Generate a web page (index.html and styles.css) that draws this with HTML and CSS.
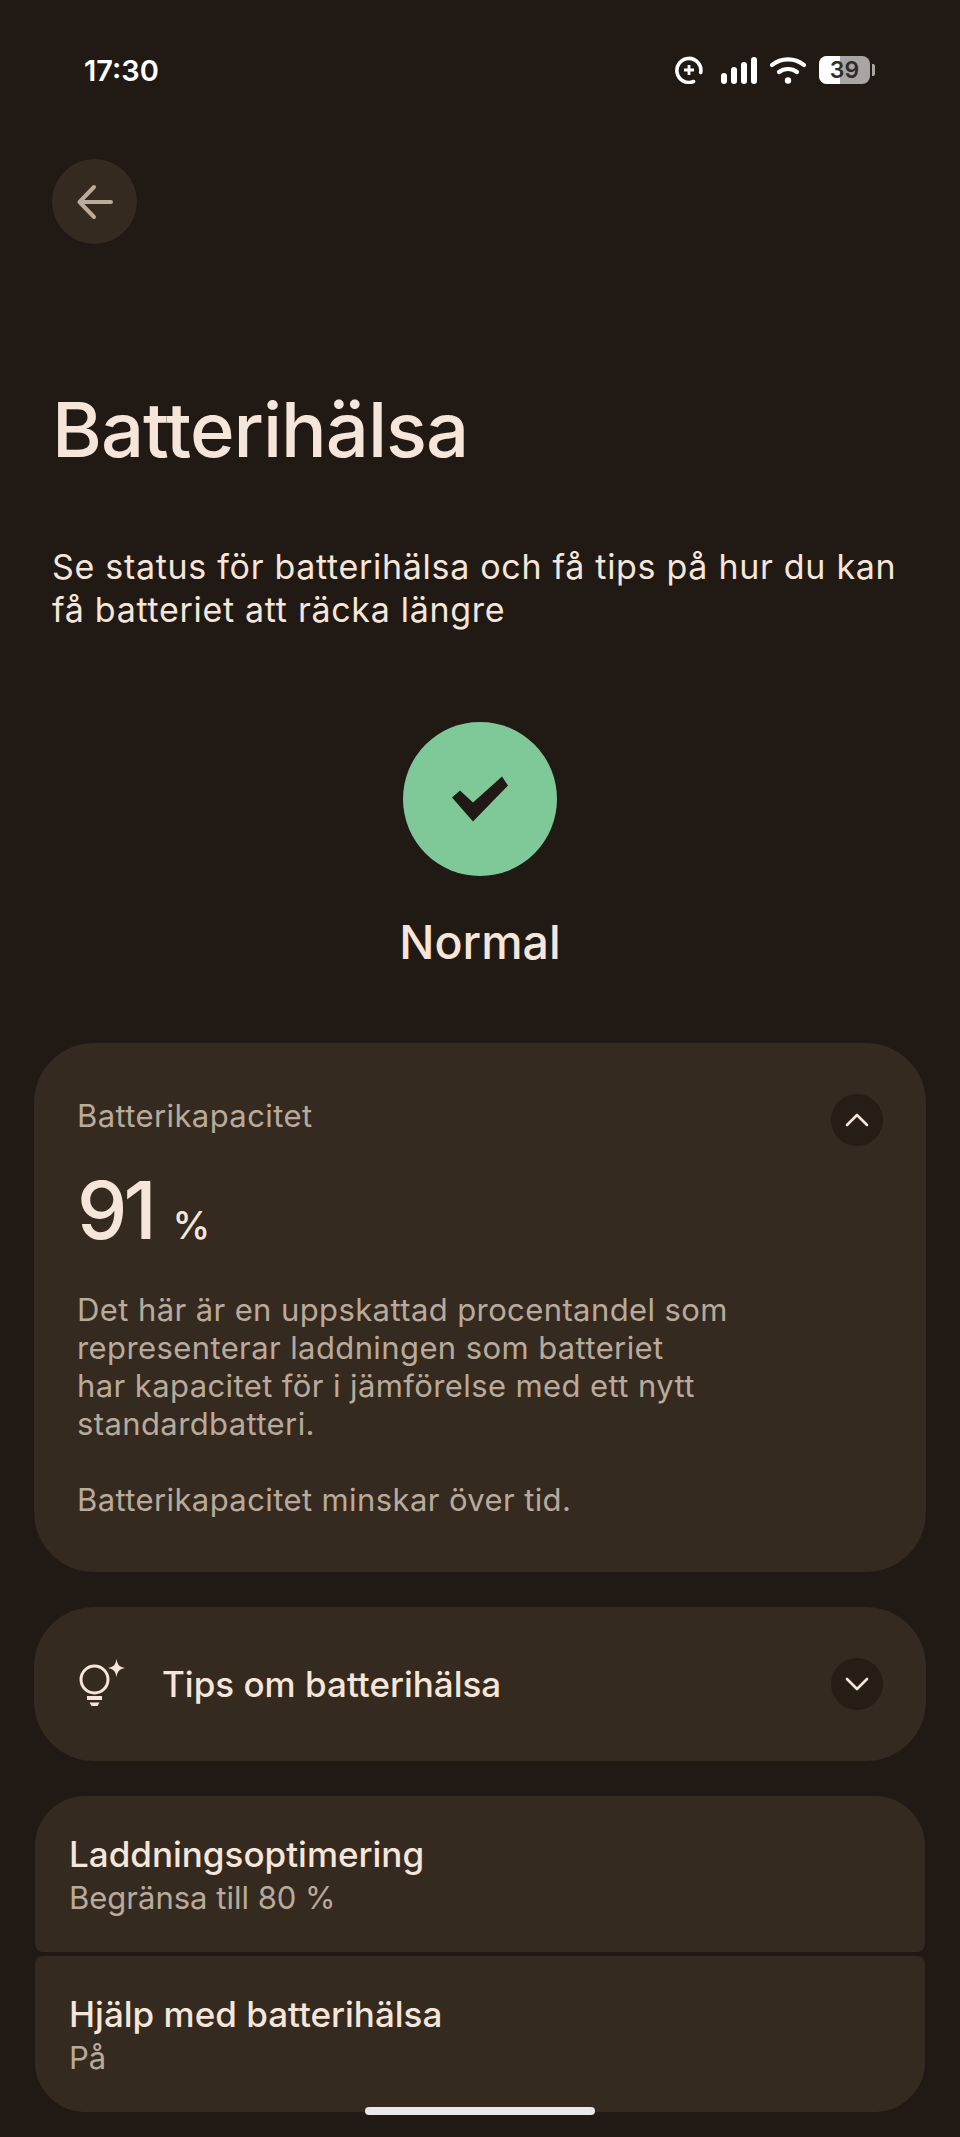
FILE: index.html
```html
<!DOCTYPE html>
<html lang="sv">

<head>
    <meta charset="UTF-8">
    <meta name="viewport" content="width=device-width, initial-scale=1.0">
    <title>Batterihälsa</title>
    <link rel="stylesheet" href="styles.css">
</head>

<body>
    <div class="screen">
        <!-- Status bar -->
        <div class="status-bar">
            <span class="clock">17:30</span>
            <div class="status-icons">
                <svg class="ring" width="28" height="28" viewBox="0 0 28 28" fill="none" stroke="#fff">
                    <path d="M18.500 25.500 A12 12 0 1 1 25.700 16.500" stroke-width="3.600" stroke-linecap="round"/>
                    <path d="M14 9v10M9 14h10" stroke-width="2.800"/>
                </svg>
                <svg width="36" height="27" viewBox="0 0 36 27" fill="#fff">
                    <rect x="0" y="16" width="6" height="11" rx="3"/>
                    <rect x="10" y="10" width="6" height="17" rx="3"/>
                    <rect x="20" y="5" width="6" height="22" rx="3"/>
                    <rect x="30" y="0" width="6" height="27" rx="3"/>
                </svg>
                <svg width="36" height="27" viewBox="0 0 36 27" fill="none" stroke="#fff" stroke-width="4.200" stroke-linecap="round">
                    <path d="M2 8 C11 0.500 25 0.500 34 8"/>
                    <path d="M9 15 C14 11 22 11 27 15"/>
                    <circle cx="18" cy="23.500" r="3.200" fill="#fff" stroke="none"/>
                </svg>
                <div class="battery">
                    <div class="battery-body"><span class="battery-fill"></span><span class="battery-level">39</span></div>
                    <span class="battery-tip"></span>
                </div>
            </div>
        </div>

        <!-- Back button -->
        <div class="back-btn">
            <svg width="40" height="40" viewBox="0 0 40 40" fill="none" stroke="#bcaa9b" stroke-width="4" stroke-linecap="round" stroke-linejoin="round">
                <path d="M36 20H5M19 5 4.500 20 19 35"/>
            </svg>
        </div>

        <h1 class="title">Batterihälsa</h1>
        <p class="intro">Se status för batterihälsa och få tips på hur du kan<br>få batteriet att räcka längre</p>

        <!-- Health status -->
        <div class="health">
            <div class="health-circle">
                <svg width="60" height="46" viewBox="0 0 60 46" fill="#211914">
                    <path d="M2 21.500 10 14.500 23 26.500 52 0.500 58 9.500 23 45.500Z"/>
                </svg>
            </div>
            <div class="health-label">Normal</div>
        </div>

        <!-- Capacity card -->
        <div class="card capacity">
            <div class="capacity-head">
                <span class="muted body-text capacity-label">Batterikapacitet</span>
                <div class="toggle">
                    <svg width="24" height="14" viewBox="0 0 24 14" fill="none" stroke="#f6e6da" stroke-width="2.600" stroke-linecap="round" stroke-linejoin="round">
                        <path d="M2 12 12 2 22 12"/>
                    </svg>
                </div>
            </div>
            <div class="capacity-value">91<span class="unit">%</span></div>
            <p class="muted body-text capacity-text">Det här är en uppskattad procentandel som<br>representerar laddningen som batteriet<br>har kapacitet för i jämförelse med ett nytt<br>standardbatteri.</p>
            <p class="muted body-text capacity-text capacity-note">Batterikapacitet minskar över tid.</p>
        </div>

        <!-- Tips card -->
        <div class="card tips">
            <svg class="tips-icon" width="48" height="52" viewBox="0 0 48 52" fill="none" stroke="#f6e6da" stroke-width="3">
                <circle cx="17.500" cy="21.500" r="13.500"/>
                <path d="M10 40h15" stroke-width="4"/>
                <path d="M12.500 44.500h10l-2 3.500h-6z" fill="#f6e6da" stroke="none"/>
                <path d="M39.500 1 C40.500 7 42.500 9 48 10 C42.500 11 40.500 13 39.500 19 C38.500 13 36.500 11 31 10 C36.500 9 38.500 7 39.500 1Z" fill="#f6e6da" stroke="none"/>
            </svg>
            <span class="tips-label">Tips om batterihälsa</span>
            <div class="toggle">
                <svg width="24" height="14" viewBox="0 0 24 14" fill="none" stroke="#f6e6da" stroke-width="2.600" stroke-linecap="round" stroke-linejoin="round">
                    <path d="M2 2 12 12 22 2"/>
                </svg>
            </div>
        </div>

        <!-- Settings -->
        <div class="settings">
            <div class="setting setting-top">
                <div class="setting-title">Laddningsoptimering</div>
                <div class="muted">Begränsa till 80 %</div>
            </div>
            <div class="setting setting-bottom">
                <div class="setting-title">Hjälp med batterihälsa</div>
                <div class="muted">På</div>
            </div>
        </div>

        <div class="home-bar"></div>
    </div>
</body>

</html>
```

FILE: styles.css
```css
/* Page */
html,
body {
    margin: 0;
    background-color: #211914;
}

.screen {
    position: relative;
    width: 960px;
    height: 2137px;
    overflow: hidden;
    color: #f6e6da;
    font-family: 'Inter', 'Noto Sans', sans-serif;
}

.muted {
    color: #b9aa9c;
    font-size: 31px;
    line-height: 38px;
}

.body-text {
    letter-spacing: 0.4px;
}

/* Status bar */
.status-bar {
    display: flex;
    justify-content: space-between;
    align-items: center;
    height: 40px;
    padding: 50px 85px 0 84px;
    color: #fff;
}

.clock {
    font-size: 29px;
    font-weight: 600;
}

.status-icons {
    display: flex;
    align-items: center;
    gap: 13px;
}

.ring {
    margin-right: 5px;
}

.battery {
    display: flex;
    align-items: center;
    gap: 2px;
}

.battery-body {
    position: relative;
    width: 51px;
    height: 28px;
    border-radius: 8px;
    overflow: hidden;
    background-color: #a8a5a2;
}

.battery-fill {
    position: absolute;
    left: 0;
    top: 0;
    bottom: 0;
    width: 21px;
    background-color: #fff;
}

.battery-level {
    position: relative;
    display: block;
    text-align: center;
    color: #302c29;
    font-size: 23px;
    font-weight: 600;
    line-height: 28px;
}

.battery-tip {
    width: 3px;
    height: 12px;
    border-radius: 0 2px 2px 0;
    background-color: #a8a5a2;
}

/* Back button */
.back-btn {
    display: flex;
    align-items: center;
    justify-content: center;
    width: 85px;
    height: 85px;
    margin: 69px 0 0 52px;
    border-radius: 50%;
    background-color: #352a20;
}

/* Heading */
.title {
    margin: 140px 0 0 52px;
    font-size: 76px;
    font-weight: 500;
    line-height: 90px;
    letter-spacing: -1px;
}

.intro {
    margin: 71px 0 0 52px;
    font-size: 34px;
    line-height: 43px;
    letter-spacing: 0.7px;
}

/* Health status */
.health {
    display: flex;
    flex-direction: column;
    align-items: center;
    margin-top: 91px;
}

.health-circle {
    display: flex;
    align-items: center;
    justify-content: center;
    width: 154px;
    height: 154px;
    border-radius: 50%;
    background-color: #7fc999;
}

.health-label {
    margin-top: 39px;
    font-size: 46.5px;
    font-weight: 500;
    line-height: 54px;
}

/* Cards */
.card {
    margin: 0 34px;
    background-color: #352a20;
    border-radius: 60px;
}

.toggle {
    display: flex;
    align-items: center;
    justify-content: center;
    width: 52px;
    height: 52px;
    border-radius: 50%;
    background-color: #261d15;
}

.capacity {
    box-sizing: border-box;
    height: 529px;
    margin-top: 74px;
    padding: 51px 43px 0;
}

.capacity-head {
    display: flex;
    justify-content: space-between;
    align-items: flex-start;
    height: 52px;
}

.capacity-label {
    margin-top: 3px;
}

.capacity-value {
    margin-top: 16px;
    font-size: 80px;
    font-weight: 500;
    line-height: 96px;
    letter-spacing: -4px;
}

.unit {
    margin-left: 20px;
    font-size: 38px;
    letter-spacing: 0;
}

.capacity-text {
    margin: 18px 0 0;
}

.capacity-note {
    margin-top: 38px;
}

.tips {
    display: flex;
    align-items: center;
    box-sizing: border-box;
    height: 154px;
    margin-top: 35px;
    padding: 0 43px;
}

.tips-icon {
    flex-shrink: 0;
}

.tips-label {
    flex: 1;
    margin-left: 37px;
    font-size: 35px;
    font-weight: 500;
}

/* Settings list */
.settings {
    display: flex;
    flex-direction: column;
    gap: 4px;
    margin: 35px 35px 0;
}

.setting {
    box-sizing: border-box;
    height: 156px;
    padding: 36px 34px 0;
    background-color: #352a20;
}

.setting-top {
    border-radius: 50px 50px 8px 8px;
}

.setting-bottom {
    border-radius: 8px 8px 50px 50px;
}

.setting-title {
    margin-bottom: 3px;
    font-size: 35px;
    font-weight: 500;
    line-height: 44px;
}

/* Gesture bar */
.home-bar {
    position: absolute;
    left: 365px;
    top: 2107px;
    width: 230px;
    height: 8px;
    border-radius: 4px;
    background-color: #e8e8e8;
}
```
